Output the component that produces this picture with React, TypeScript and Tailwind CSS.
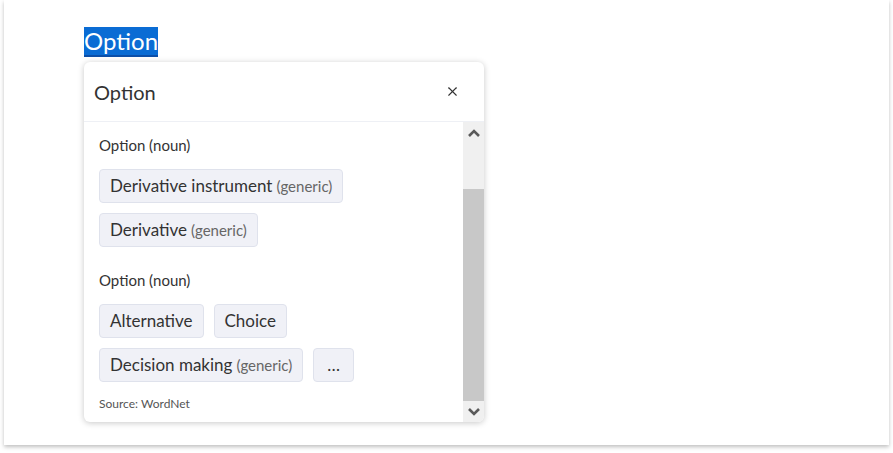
import { X } from "lucide-react";

type Chip = { label: string; note?: string };

const senses: { title: string; chips: Chip[] }[] = [
	{
		title: "Option (noun)",
		chips: [
			{ label: "Derivative instrument", note: "(generic)" },
			{ label: "Derivative", note: "(generic)" }
		]
	},
	{
		title: "Option (noun)",
		chips: [
			{ label: "Alternative" },
			{ label: "Choice" },
			{ label: "Decision making", note: "(generic)" },
			{ label: "…" }
		]
	}
];

function Chevron({ up }: { up?: boolean }) {
	return (
		<svg width="12" height="8" viewBox="0 0 12 8" className={up ? "" : "rotate-180"}>
			<path d="M1 7 L6 2 L11 7" fill="none" stroke="#5a5a5a" strokeWidth="2.6" />
		</svg>
	);
}

export default function App() {
	return (
		<div
			className="w-[893px] h-[453px] bg-white pl-[4px] pr-[4px]"
			style={{ fontFamily: "Lato, 'Noto Sans', sans-serif" }}
		>
			<div className="h-[445px] bg-white shadow-[0_2px_4px_rgba(0,0,0,0.25)] pl-[80px] pt-[27px]">
				<span className="inline-block bg-[#0a6cd4] text-white text-[24px] leading-[28px] border-b-2 border-[#0c4fa8]">
					Option
				</span>
				<div className="mt-[5px] w-[400px] h-[360px] bg-white rounded-[6px] shadow-[0_1px_6px_rgba(0,0,0,0.22)] flex flex-col overflow-hidden">
					<div className="h-[60px] flex items-center justify-between pl-[10px] pr-[24px] border-b border-[#eef0f5] shrink-0">
						<span className="text-[20px] text-[#333]">Option</span>
						<X size={15} strokeWidth={1.8} className="text-[#333]" />
					</div>
					<div className="flex flex-1 min-h-0">
						<div className="flex-1 pl-[15px] pt-[13px] overflow-hidden">
							{senses.map((s, i) => (
								<div key={i} className="mb-[23px]">
									<div className="text-[15px] leading-[20px] text-[#333] mb-[14px]">{s.title}</div>
									<div className="flex flex-wrap gap-[10px]">
										{s.chips.map((c, j) => (
											<div
												key={j}
												className={`h-[34px] flex items-center gap-[4px] bg-[#f0f1f7] border border-[#dfe2ec] rounded-[4px] text-[#333] ${c.label === "…" ? "px-[13px]" : "px-[10px]"}`}
											>
												<span className="text-[17px]">{c.label}</span>
												{c.note && <span className="text-[15px] text-[#666]">{c.note}</span>}
											</div>
										))}
									</div>
								</div>
							))}
							<div className="text-[12px] text-[#555] -mt-[10px]">Source: WordNet</div>
						</div>
						<div className="w-[21px] bg-[#f0f0f0] flex flex-col">
							<div className="h-[20px] pt-[2px] flex items-center justify-center">
								<Chevron up />
							</div>
							<div className="h-[47px]" />
							<div className="flex-1 bg-[#c8c8c8]" />
							<div className="h-[21px] flex items-center justify-center">
								<Chevron />
							</div>
						</div>
					</div>
				</div>
			</div>
		</div>
	);
}
